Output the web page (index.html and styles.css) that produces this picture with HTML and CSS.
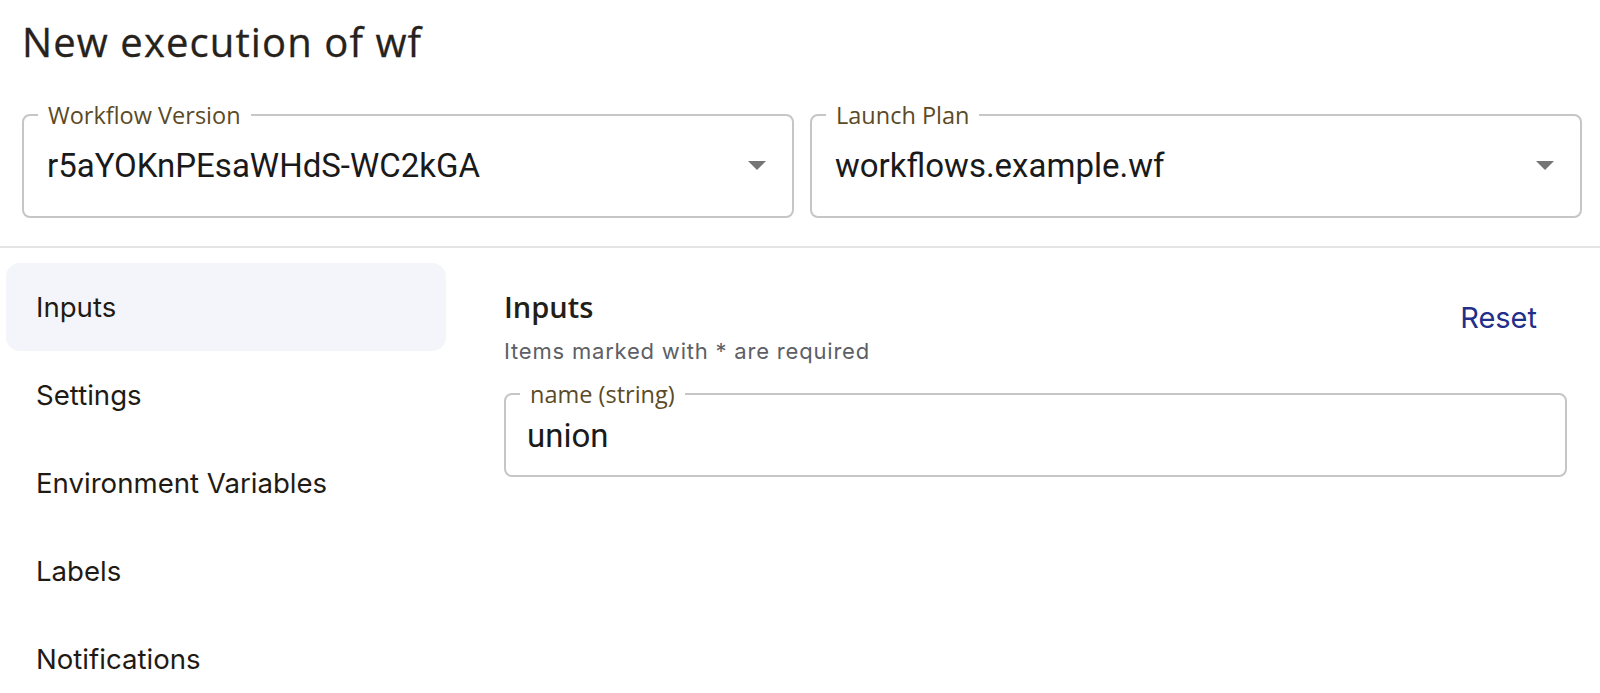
FILE: index.html
```html
<!DOCTYPE html>
<html lang="en">
<head>
<meta charset="utf-8">
<title>New execution of wf</title>
<link rel="stylesheet" href="styles.css">
</head>
<body>
<header class="page-header">
  <h1 class="title">New execution of wf</h1>
  <div class="select-row">
    <fieldset class="select-field">
      <legend class="field-label">Workflow Version</legend>
      <div class="select-value">
        <span class="value-text">r5aYOKnPEsaWHdS-WC2kGA</span>
        <svg class="caret" width="18" height="9" viewBox="0 0 18 9"><path d="M0 0 L18 0 L9 9 Z" fill="#757575"/></svg>
      </div>
    </fieldset>
    <fieldset class="select-field">
      <legend class="field-label">Launch Plan</legend>
      <div class="select-value">
        <span class="value-text">workflows.example.wf</span>
        <svg class="caret" width="18" height="9" viewBox="0 0 18 9"><path d="M0 0 L18 0 L9 9 Z" fill="#757575"/></svg>
      </div>
    </fieldset>
  </div>
</header>
<hr class="divider">
<main class="content">
  <nav class="side-nav">
    <div class="nav-item active">Inputs</div>
    <div class="nav-item">Settings</div>
    <div class="nav-item">Environment Variables</div>
    <div class="nav-item">Labels</div>
    <div class="nav-item">Notifications</div>
  </nav>
  <section class="panel">
    <div class="panel-head">
      <div class="panel-titles">
        <h2 class="panel-title">Inputs</h2>
        <p class="panel-sub">Items marked with * are required</p>
      </div>
      <button class="reset-btn">Reset</button>
    </div>
    <fieldset class="input-field">
      <legend class="input-label">name (string)</legend>
      <div class="input-value">union</div>
    </fieldset>
  </section>
</main>
</body>
</html>
```
FILE: styles.css
```css
* { box-sizing: border-box; }
html, body { background: #ffffff; }
body {
  margin: 0;
  font-family: "Inter", "Roboto", sans-serif;
  color: #1f1b14;
}
.page-header {
  padding: 18px 18px 0 22px;
}
.title {
  margin: 0;
  font-family: "Open Sans", sans-serif;
  font-weight: 400;
  font-size: 40px;
  line-height: 48px;
  letter-spacing: 1.1px;
  color: #27231c;
  -webkit-text-stroke: 0.3px #27231c;
}
.select-row {
  display: flex;
  gap: 16px;
  margin-top: 37px;
}
.select-field {
  flex: 1 1 0;
  margin: 0;
  min-width: 0;
  padding: 0 26px 0 23px;
  border: 2px solid #c6c6c6;
  border-radius: 8px;
}
.field-label {
  margin-left: -9px;
  padding: 0 10px;
  font-family: "Open Sans", sans-serif;
  font-size: 23.5px;
  line-height: 24px;
  color: #5b4a25;
}
.select-value {
  display: flex;
  align-items: center;
  justify-content: space-between;
  height: 89px;
  padding-bottom: 12px;
}
.value-text {
  font-family: "Roboto", sans-serif;
  font-size: 33px;
  color: #1a1a1a;
}
.caret { display: block; flex: none; }
.divider {
  margin: 28px 0 0 0;
  border: 0;
  height: 2px;
  background: #e4e4e4;
}
.content {
  display: flex;
  align-items: flex-start;
}
.side-nav {
  width: 446px;
  flex: none;
  padding: 15px 0 0 6px;
  display: flex;
  flex-direction: column;
}
.nav-item {
  height: 88px;
  display: flex;
  align-items: center;
  padding-left: 30px;
  border-radius: 14px;
  font-size: 27.6px;
  color: #1f1b14;
}
.nav-item.active { background: #f4f5fa; }
.panel {
  flex: 1 1 auto;
  padding: 41px 33px 0 58px;
}
.panel-head {
  display: flex;
  justify-content: space-between;
  align-items: flex-start;
}
.panel-title {
  margin: 0;
  font-family: "Open Sans", sans-serif;
  font-size: 29px;
  line-height: 36px;
  font-weight: 600;
  color: #231f18;
}
.panel-sub {
  margin: 13px 0 0 0;
  font-size: 22px;
  line-height: 26px;
  letter-spacing: 0.8px;
  color: #5d5f66;
}
.reset-btn {
  margin: 12px 30px 0 0;
  padding: 0;
  border: 0;
  background: none;
  font-family: "Inter", sans-serif;
  font-size: 29px;
  line-height: 34px;
  color: #1f2f8a;
}
.input-field {
  margin: 18px 0 0 0;
  min-width: 0;
  padding: 0 21px;
  border: 2px solid #c6c6c6;
  border-radius: 8px;
}
.input-label {
  margin-left: -7px;
  padding: 0 10px;
  font-family: "Open Sans", sans-serif;
  font-size: 23.5px;
  line-height: 24px;
  color: #5b4a25;
}
.input-value {
  height: 69px;
  padding-bottom: 10px;
  display: flex;
  align-items: center;
  font-family: "Roboto", sans-serif;
  font-size: 33px;
  color: #1a1a1a;
}
```
